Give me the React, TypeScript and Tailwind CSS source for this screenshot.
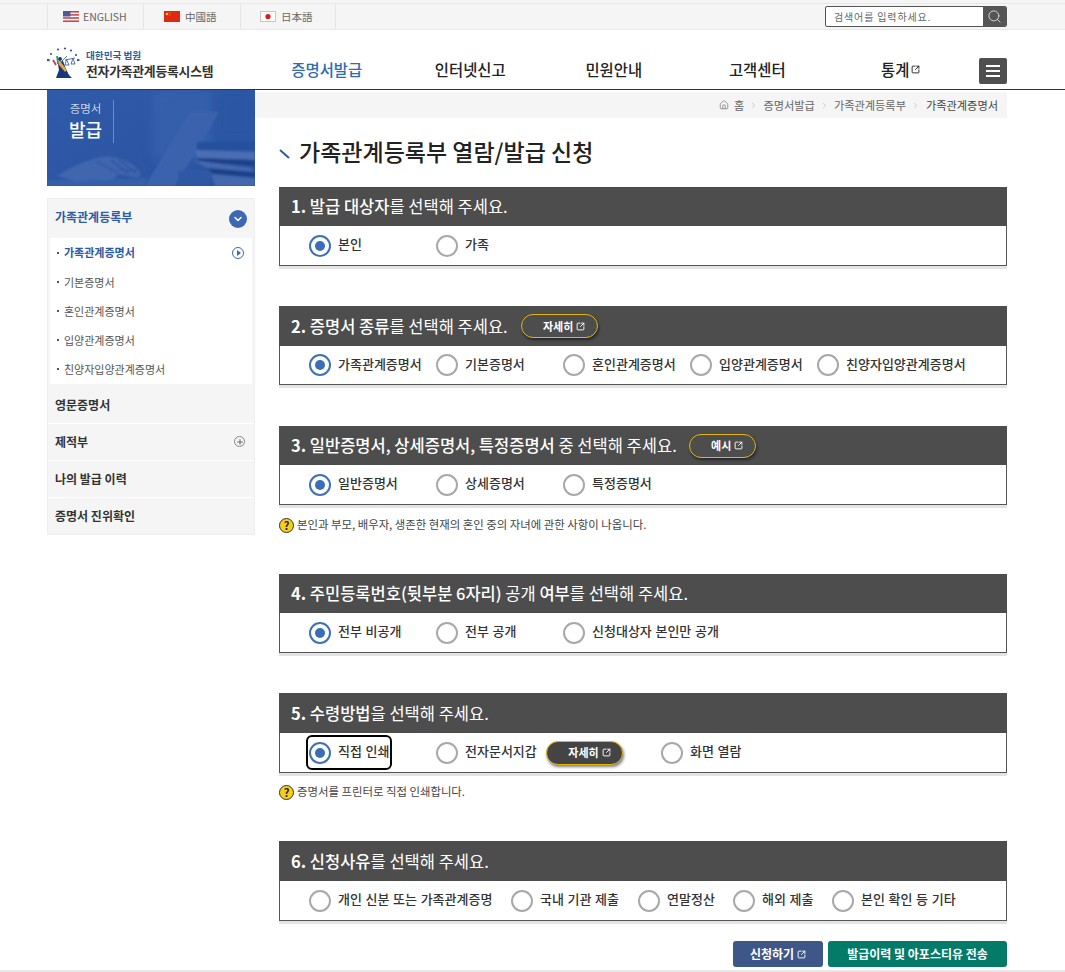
import { ChevronDown, ChevronRight, Home, Plus, Search, SquareArrowOutUpRight } from "lucide-react";

const navItems = ["증명서발급", "인터넷신고", "민원안내", "고객센터", "통계"];
const subItems = ["가족관계증명서", "기본증명서", "혼인관계증명서", "입양관계증명서", "친양자입양관계증명서"];

function UsFlag() {
  return (
    <svg width="16" height="11" viewBox="0 0 16 11" className="shrink-0">
      <rect width="16" height="11" fill="#fff" />
      <rect width="16" height="1.6" fill="#c8474d" />
      <rect y="3.1" width="16" height="1.6" fill="#c8474d" />
      <rect y="6.2" width="16" height="1.6" fill="#c8474d" />
      <rect y="9.4" width="16" height="1.6" fill="#c8474d" />
      <rect width="7.5" height="5.5" fill="#4d5a94" />
    </svg>
  );
}

function CnFlag() {
  return (
    <svg width="16" height="11" viewBox="0 0 16 11" className="shrink-0">
      <rect width="16" height="11" fill="#de2a10" />
      <circle cx="3" cy="3" r="1.3" fill="#f6d21a" />
      <circle cx="5.6" cy="1.6" r="0.4" fill="#f6d21a" />
      <circle cx="6.4" cy="3" r="0.4" fill="#f6d21a" />
      <circle cx="5.6" cy="4.6" r="0.4" fill="#f6d21a" />
    </svg>
  );
}

function JpFlag() {
  return (
    <svg width="16" height="11" viewBox="0 0 16 11" className="shrink-0">
      <rect x="0.5" y="0.5" width="15" height="10" fill="#fff" stroke="#c9c4bc" />
      <circle cx="8" cy="5.5" r="2.6" fill="#e3160f" />
    </svg>
  );
}

function CourtLogo() {
  return (
    <svg width="34" height="32" viewBox="0 0 34 32" className="shrink-0">
      <g fill="#2c5a9c">
        <rect x="1" y="12" width="2.6" height="2.2" />
        <circle cx="5" cy="7" r="1.1" />
        <circle cx="12" cy="2.5" r="1.1" />
        <circle cx="19" cy="1.5" r="1.1" />
        <circle cx="25" cy="3.5" r="1.1" />
        <circle cx="30" cy="8" r="1.1" />
        <rect x="31" y="12" width="2.4" height="2" />
      </g>
      <circle cx="14" cy="12" r="2" fill="#14397f" />
      <path d="M10 31 L13 23 L11.5 15 L17 14 L20 22 L23 28 L26 31 Z" fill="#14397f" />
      <path d="M10.5 15 L19 25 L21 23 L14 14 Z" fill="#e8a33a" />
      <path d="M11 9 L12 17" stroke="#2f9e5b" strokeWidth="1.8" fill="none" />
      <path d="M7 13 L10 18" stroke="#c1386f" strokeWidth="1.8" fill="none" />
      <path d="M16 14 L21 9 M19 13 L29 11 M20.5 12.5 L19 18 L23 18 Z M27 11.5 L25 17 L29 17 Z" stroke="#2c4f93" strokeWidth="0.8" fill="none" />
    </svg>
  );
}

function BannerArt() {
  return (
    <svg viewBox="0 0 208 96" width="208" height="96" className="block">
      <defs>
        <linearGradient id="bannerBg" x1="0" y1="0" x2="1" y2="1">
          <stop offset="0" stopColor="#305ba9" />
          <stop offset="1" stopColor="#2a52a0" />
        </linearGradient>
        <filter id="soft" x="-10%" y="-10%" width="120%" height="120%">
          <feGaussianBlur stdDeviation="1" />
        </filter>
        <filter id="softer" x="-20%" y="-20%" width="140%" height="140%">
          <feGaussianBlur stdDeviation="5" />
        </filter>
      </defs>
      <rect width="208" height="96" fill="url(#bannerBg)" />
      <rect x="105" y="0" width="60" height="70" fill="#3a65b0" opacity="0.6" filter="url(#softer)" />
      <rect x="170" y="0" width="38" height="48" fill="#2b56a3" filter="url(#softer)" />
      <path d="M98 96 L143 22 L172 22 L150 60 L128 96 Z" fill="#3a63ad" filter="url(#soft)" />
      <path d="M0 96 L0 90 L100 88 L98 96 Z" fill="#345eaa" filter="url(#soft)" />
      <path d="M10 86 C22 78 40 70 50 68 C62 64 78 68 90 78 C96 84 94 88 88 87 L70 84 C70 90 60 92 48 90 L30 92 Z" fill="#3f66ae" filter="url(#soft)" />
      <path d="M72 70 L90 84 M64 70 L82 84 M50 72 L70 82 M72 80 L92 80" stroke="#2a52a0" strokeWidth="1.2" filter="url(#soft)" />
      <g filter="url(#soft)" opacity="0.95">
        <path d="M150 52 L208 52 L208 60 L150 60 Z" fill="#27509d" />
        <path d="M148 60 L208 62 L208 70 L150 68 Z" fill="#4c70b5" />
        <path d="M150 68 L208 70 L208 76 L152 72 Z" fill="#1d3f88" />
        <path d="M146 70 L204 78 L208 84 L160 78 Z" fill="#4769b0" />
        <path d="M160 78 L208 82 L208 88 L166 84 Z" fill="#1e418a" />
        <path d="M164 84 L208 88 L208 96 L168 96 Z" fill="#446aaf" />
      </g>
      <path d="M132 96 L131 82 C140 78 156 78 164 82 L162 96 Z" fill="#2e58a4" filter="url(#soft)" />
    </svg>
  );
}

function ExtIcon({ className }: { className?: string }) {
  return <SquareArrowOutUpRight className={className ?? "h-[9px] w-[9px]"} strokeWidth={2.5} />;
}

function Radio({ label, checked, focused, className }: { label: string; checked?: boolean; focused?: boolean; className: string }) {
  return (
    <label className={`flex items-center ${className}`}>
      <span className={`flex items-center gap-[7px] ${focused ? "rounded-[3px] py-[3px] outline-2 outline-offset-[1px] outline-black" : ""}`}>
        <span
          className={`flex h-[22px] w-[22px] shrink-0 items-center justify-center rounded-full border-2 bg-white ${
            checked ? "border-[#3f70b8]" : "border-[#a8a8a8]"
          }`}
        >
          {checked && <span className="h-[10px] w-[10px] rounded-full bg-[#3a6cb8]" />}
        </span>
        <span className="whitespace-nowrap pb-[3px] text-[13px] font-medium text-[#333] [word-spacing:0.7px]">{label}</span>
      </span>
    </label>
  );
}

function Pill({ label, className }: { label: string; className: string }) {
  return (
    <span
      className={`flex h-[24px] items-center justify-center gap-[3px] rounded-full border-[1.5px] border-[#e6b50c] pl-[10px] text-[11px] font-bold text-white shadow-[1px_2px_3px_rgba(0,0,0,0.5)] ${className}`}
    >
      {label}
      <ExtIcon />
    </span>
  );
}

function Section({
  title,
  pill,
  bodyH,
  headH,
  children,
  className,
}: {
  title: React.ReactNode;
  pill?: React.ReactNode;
  headH: string;
  bodyH: string;
  children: React.ReactNode;
  className?: string;
}) {
  return (
    <section className={`shadow-[0_3px_0_#e4e4e4] ${className ?? ""}`}>
      <div className={`flex items-center bg-[#4d4d4d] pl-[12px] text-[16.5px] text-white ${headH}`}>
        <h2 className="whitespace-nowrap">{title}</h2>
        {pill}
      </div>
      <div className={`flex items-center border-x border-b border-[#555] bg-white pl-[29px] ${bodyH}`}>{children}</div>
    </section>
  );
}

function Note({ text, className }: { text: string; className: string }) {
  return (
    <p className={`flex items-center gap-[3px] text-[11.4px] text-[#444] ${className}`}>
      <span className="flex h-[15px] w-[15px] shrink-0 items-center justify-center rounded-full border border-[#333] bg-[#f7cf17] text-[11px] font-bold leading-none text-[#222]">
        ?
      </span>
      {text}
    </p>
  );
}

export default function App() {
  return (
    <div className="relative h-[972px] w-[1065px] overflow-hidden bg-white font-['Noto_Sans_CJK_KR','Liberation_Sans',sans-serif]">
      <div className="h-[30px] border-b border-[#e8e8e8] bg-[#f5f5f5] pt-[3px]">
        <div className="border-t border-[#e8e8e8]">
          <div className="ml-[47px] flex w-[960px] items-center justify-between">
            <div className="flex h-[25px] border-r border-[#e6e6e6]">
              <span className="flex w-[96px] items-center gap-[4px] border-l border-[#e6e6e6] pl-[15px] text-[10.5px] text-[#666]">
                <UsFlag />
                ENGLISH
              </span>
              <span className="flex w-[97px] items-center gap-[5px] border-l border-[#e6e6e6] pl-[20px] text-[10.5px] text-[#666]">
                <CnFlag />
                中國語
              </span>
              <span className="flex w-[95px] items-center gap-[5px] border-l border-[#e6e6e6] pl-[19px] text-[10.5px] text-[#666]">
                <JpFlag />
                日本語
              </span>
            </div>
            <div className="flex h-[21px] w-[182px] items-center overflow-hidden rounded-[2px] border border-[#555] bg-white">
              <span className="flex-1 pl-[8px] text-[10px] tracking-[0.85px] text-[#666]">검색어를 입력하세요.</span>
              <span className="flex h-full w-[23px] items-center justify-center bg-[#555]">
                <Search className="h-[15px] w-[15px] text-[#ddd]" strokeWidth={1.5} />
              </span>
            </div>
          </div>
        </div>
      </div>

      <header className="h-[60px] border-b border-[#333]">
        <div className="ml-[46px] flex h-full w-[961px] items-center">
          <div className="flex w-[208px] items-center gap-[6px] pt-[7px]">
            <CourtLogo />
            <div>
              <div className="text-[9.6px] font-bold leading-[12px] text-[#2a5f9e]">대한민국 법원</div>
              <div className="mt-[2px] whitespace-nowrap text-[12.8px] font-bold leading-[15px] tracking-[-0.2px] text-[#333]">
                전자가족관계등록시스템
              </div>
            </div>
          </div>
          <nav className="ml-[1px] flex pt-[20px]">
            {navItems.map((item, i) => (
              <a
                key={item}
                className={`flex w-[143.5px] items-center justify-center text-[15.4px] font-medium ${
                  i === 0 ? "text-[#2f6bb0]" : "text-[#222]"
                }`}
              >
                {item}
                {item === "통계" && <ExtIcon className="ml-[2px] h-[9px] w-[9px]" />}
              </a>
            ))}
          </nav>
          <button className="ml-auto mt-[22px] flex h-[26px] w-[28px] flex-col items-center justify-center gap-[3px] rounded-[2px] bg-[#4f4f4f]">
            <span className="h-[2px] w-[14px] bg-white" />
            <span className="h-[2px] w-[14px] bg-white" />
            <span className="h-[2px] w-[14px] bg-white" />
          </button>
        </div>
      </header>

      <div className="ml-[47px] flex w-[960px]">
        <aside className="w-[208px]">
          <div className="relative h-[96px] overflow-hidden">
            <BannerArt />
            <div className="absolute left-[20px] top-[10px] flex h-[43px] w-[47px] flex-col items-center border-r border-[#6e8cc4] pr-[9px] text-white">
              <span className="whitespace-nowrap text-[11.5px] font-light leading-[16px]">증명서</span>
              <span className="whitespace-nowrap text-[18px] font-medium leading-[26px]">발급</span>
            </div>
          </div>
          <div className="mt-[12px] border border-[#eeeeee] bg-[#f5f5f5]">
            <div className="flex h-[39px] items-center justify-between pl-[7px] pr-[7px] text-[12px] font-bold text-[#2d5ca6]">
              <span className="pb-[3px]">가족관계등록부</span>
              <span className="flex h-[18px] w-[18px] items-center justify-center rounded-full bg-[#3d68b6]">
                <ChevronDown className="h-[12px] w-[12px] text-white" strokeWidth={3} />
              </span>
            </div>
            <ul className="mx-[2px] rounded-[2px] bg-white">
              {subItems.map((item, i) => (
                <li
                  key={item}
                  className={`flex h-[29.2px] items-center justify-between pl-[7px] pr-[8px] text-[11px] ${
                    i === 0 ? "font-bold text-[#2a5aa8]" : "text-[#555]"
                  }`}
                >
                  <span className="flex items-center gap-[5px]">
                    <span className="h-[2px] w-[2px] bg-[#555]" />
                    {item}
                  </span>
                  {i === 0 && (
                    <span className="flex h-[12px] w-[12px] items-center justify-center rounded-full border border-[#3d68b6]">
                      <span className="ml-[1px] h-0 w-0 border-y-[3px] border-l-[4px] border-y-transparent border-l-[#3d68b6]" />
                    </span>
                  )}
                </li>
              ))}
            </ul>
            <div className="flex h-[40px] items-center border-b border-white pl-[7px] pt-[3px] text-[12px] font-bold text-[#333]">영문증명서</div>
            <div className="flex h-[37px] items-center justify-between border-b border-white pl-[7px] pr-[9px] text-[12px] font-bold text-[#333]">
              제적부
              <span className="flex h-[11px] w-[11px] items-center justify-center rounded-full border border-[#888]">
                <Plus className="h-[8px] w-[8px] text-[#666]" strokeWidth={3} />
              </span>
            </div>
            <div className="flex h-[37px] items-center border-b border-white pl-[7px] text-[12px] font-bold text-[#333]">나의 발급 이력</div>
            <div className="flex h-[36px] items-center pl-[7px] text-[12px] font-bold text-[#333]">증명서 진위확인</div>
          </div>
        </aside>

        <main className="w-[752px]">
          <div className="mt-[2px] flex h-[26px] items-center justify-end gap-[5px] bg-[#f5f5f5] pr-[9px] text-[11.2px] text-[#666]">
            <Home className="h-[10px] w-[10px] text-[#888]" />
            <span>홈</span>
            <ChevronRight className="h-[9px] w-[9px] text-[#bbb]" />
            <span>증명서발급</span>
            <ChevronRight className="h-[9px] w-[9px] text-[#bbb]" />
            <span>가족관계등록부</span>
            <ChevronRight className="h-[9px] w-[9px] text-[#bbb]" />
            <span className="ml-[1px] text-[#444]">가족관계증명서</span>
          </div>

          <div className="pl-[24px]">
            <h1 className="flex h-[69px] items-center gap-[8px] pb-[2px] text-[23px] font-medium text-[#222]">
              <svg width="12" height="12" viewBox="0 0 12 12" className="mt-[4px] shrink-0">
                <path d="M1 2 L10 10" stroke="#2b5ca8" strokeWidth="2" />
              </svg>
              가족관계등록부 열람/발급 신청
            </h1>

            <Section headH="h-[39px]" bodyH="h-[40px]" title={<><b className="font-bold">1.</b> <span className="font-medium">발급 대상자</span>를 선택해 주세요.</>}>
              <Radio label="본인" checked className="w-[127px]" />
              <Radio label="가족" className="w-[127px]" />
            </Section>

            <Section
              className="mt-[40px]"
              headH="h-[40px]"
              bodyH="h-[39px]"
              title={<><b className="font-bold">2.</b> <span className="font-medium">증명서 종류</span>를 선택해 주세요.</>}
              pill={<Pill label="자세히" className="ml-[13px] w-[77px] bg-[#4d4d4d]" />}
            >
              <Radio label="가족관계증명서" checked className="w-[127px]" />
              <Radio label="기본증명서" className="w-[127px]" />
              <Radio label="혼인관계증명서" className="w-[127px]" />
              <Radio label="입양관계증명서" className="w-[127px]" />
              <Radio label="친양자입양관계증명서" className="w-[127px]" />
            </Section>

            <Section
              className="mt-[41px]"
              headH="h-[39px]"
              bodyH="h-[40px]"
              title={<><b className="font-bold">3.</b> <span className="font-medium">일반증명서, 상세증명서, 특정증명서</span> 중 선택해 주세요.</>}
              pill={<Pill label="예시" className="ml-[12px] w-[67px] bg-[#4d4d4d]" />}
            >
              <Radio label="일반증명서" checked className="w-[127px]" />
              <Radio label="상세증명서" className="w-[127px]" />
              <Radio label="특정증명서" className="w-[127px]" />
            </Section>
            <Note className="mt-[12px] h-[16px]" text="본인과 부모, 배우자, 생존한 현재의 혼인 중의 자녀에 관한 사항이 나옵니다." />

            <Section
              className="mt-[41px]"
              headH="h-[39px]"
              bodyH="h-[40px]"
              title={<><b className="font-bold">4.</b> <span className="font-medium">주민등록번호(뒷부분 6자리)</span> 공개 <span className="font-medium">여부</span>를 선택해 주세요.</>}
            >
              <Radio label="전부 비공개" checked className="w-[127px]" />
              <Radio label="전부 공개" className="w-[127px]" />
              <Radio label="신청대상자 본인만 공개" className="w-[200px]" />
            </Section>

            <Section
              className="mt-[40px]"
              headH="h-[40px]"
              bodyH="h-[40px]"
              title={<><b className="font-bold">5.</b> <span className="font-medium">수령방법</span>을 선택해 주세요.</>}
            >
              <Radio label="직접 인쇄" checked focused className="w-[127px]" />
              <Radio label="전자문서지갑" className="w-[110px]" />
              <Pill label="자세히" className="w-[77px] bg-[#444]" />
              <Radio label="화면 열람" className="ml-[38px]" />
            </Section>
            <Note className="mt-[11px] h-[16px]" text="증명서를 프린터로 직접 인쇄합니다." />

            <Section
              className="mt-[41px]"
              headH="h-[40px]"
              bodyH="h-[40px]"
              title={<><b className="font-bold">6.</b> <span className="font-medium">신청사유</span>를 선택해 주세요.</>}
            >
              <Radio label="개인 신분 또는 가족관계증명" className="w-[202px]" />
              <Radio label="국내 기관 제출" className="w-[127px]" />
              <Radio label="연말정산" className="w-[95px]" />
              <Radio label="해외 제출" className="w-[99px]" />
              <Radio label="본인 확인 등 기타" className="w-[130px]" />
            </Section>

            <div className="mt-[20px] flex justify-end gap-[5px] text-[12px] font-bold text-white">
              <button className="flex h-[26px] w-[90px] items-center justify-center gap-[3px] rounded-[3px] bg-[#3e5688]">
                신청하기
                <ExtIcon />
              </button>
              <button className="h-[26px] w-[179px] rounded-[3px] bg-[#047a68]">발급이력 및 아포스티유 전송</button>
            </div>
          </div>
        </main>
      </div>
      <div className="mt-[3px] h-[2px] bg-[#e8e8e8]" />
    </div>
  );
}
